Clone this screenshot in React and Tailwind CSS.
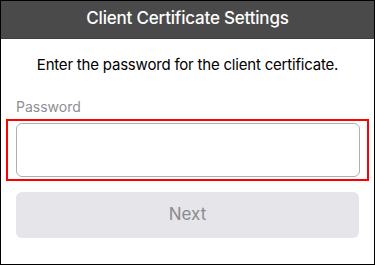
const App = () => {
    return (
        <div className="w-[375px] h-[265px] border border-black bg-white flex flex-col" style={{ fontFamily: "Inter, 'Liberation Sans', sans-serif" }}>
            <header className="h-[38px] shrink-0 bg-[#4a4a4a] border-b border-[#3e3e3e] flex justify-center pt-[7px]">
                <h1 className="text-white text-[17px] leading-[20px] font-medium tracking-[-0.2px]">Client Certificate Settings</h1>
            </header>
            <p className="mt-[16px] text-center text-[15px] leading-[19px] text-black tracking-[-0.2px]">Enter the password for the client certificate.</p>
            <label className="mt-[23px] ml-[15px] text-[14px] leading-[19px] text-[#8e8e93]">Password</label>
            <div className="mt-[3px] mx-[5px] border-2 border-[#ff0000] p-[2px] h-[62px] shrink-0 flex">
                <input type="password" className="flex-1 rounded-[6px] border-[1.5px] border-[#b0b0b0] ml-[6px] mr-[5px] outline-none" />
            </div>
            <button className="mt-[11px] mx-[15px] h-[46px] shrink-0 rounded-[6px] bg-[#e5e5ea] text-[#8a8a8e] text-[17px]">Next</button>
        </div>
    )
}

export default App
